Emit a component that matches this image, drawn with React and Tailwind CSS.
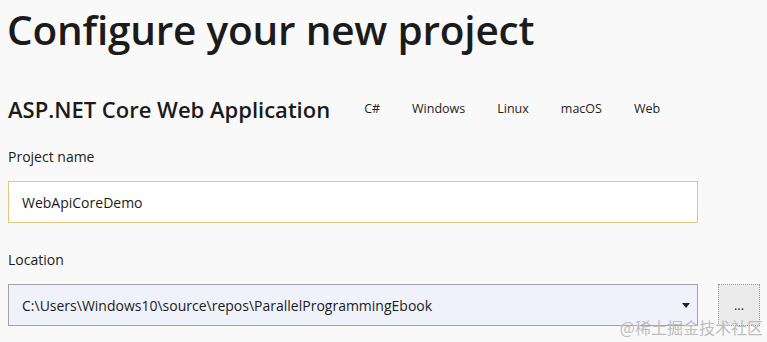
export default function App() {
  const tags = ['C#', 'Windows', 'Linux', 'macOS', 'Web']

  return (
    <div
      className="relative h-[342px] w-[767px] overflow-hidden bg-[#f9f9f9] text-[#1b1b1b]"
      style={{ fontFamily: '"Open Sans", "Noto Sans", "Liberation Sans", sans-serif' }}
    >
      <h1 className="pl-[7px] pt-[4px] text-[40.5px] leading-[52px] font-semibold tracking-[-0.2px]">
        Configure your new project
      </h1>

      <div className="mt-[38px] flex items-center pl-[8px]">
        <h2 className="text-[22px] leading-[30px] font-semibold">ASP.NET Core Web Application</h2>
        <div className="ml-[19px] flex items-center gap-[2px] text-[12.5px] text-[#222]">
          {tags.map((t) => (
            <span key={t} className="px-[15px] py-[4px]">{t}</span>
          ))}
        </div>
      </div>

      <div className="mt-[23px] pl-[8px] text-[14px] leading-[20px] font-medium">Project name</div>
      <div className="ml-[8px] mt-[14px] flex h-[42px] w-[690px] items-center border border-[#e3c77e] bg-white px-[13px] text-[14px]">
        WebApiCoreDemo
      </div>

      <div className="mt-[27px] pl-[8px] text-[14px] leading-[20px] font-medium">Location</div>
      <div className="mt-[14px] flex items-start pl-[8px]">
        <div className="flex h-[42px] w-[690px] items-center justify-between border border-[#a2a2a2] bg-[#eff2fa] pl-[13px] pr-[6px] text-[14px]">
          <span>C:\Users\Windows10\source\repos\ParallelProgrammingEbook</span>
          <svg width="8" height="5" viewBox="0 0 8 5" className="mr-[1px]">
            <path d="M0 0 L8 0 L4 5 Z" fill="#222" />
          </svg>
        </div>
        <div className="ml-[20px] flex h-[42px] w-[42px] items-center justify-center border border-dotted border-[#9a9a9a] bg-[#ebebeb] text-[13px] leading-none">
          ...
        </div>
      </div>

      <div
        className="absolute bottom-[3px] right-[4px] text-[16px] text-[#bdbdbd]"
        style={{ fontFamily: '"Noto Sans CJK SC", "Noto Sans", sans-serif' }}
      >
        @稀土掘金技术社区
      </div>
    </div>
  )
}
